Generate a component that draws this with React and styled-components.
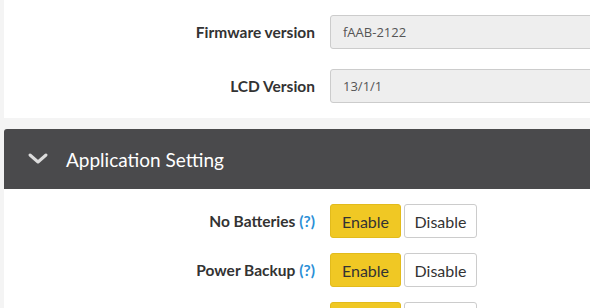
import React from 'react';
import styled, { createGlobalStyle } from 'styled-components';

const GlobalStyle = createGlobalStyle`
  html, body {
    margin: 0;
    padding: 0;
    background: #f4f4f4;
    font-family: 'Lato', 'Liberation Sans', sans-serif;
    color: #333;
    overflow: hidden;
  }
`;

const Page = styled.div`
  padding-left: 4px;
  width: 700px;
`;

const Card = styled.div`
  background: #fff;
  padding: 15px 0;
  display: flex;
  flex-direction: column;
  gap: ${p => p.gap}px;
`;

const Row = styled.div`
  display: grid;
  grid-template-columns: 311px auto;
  column-gap: 15px;
  align-items: center;
`;

const Label = styled.div`
  text-align: right;
  font-weight: 700;
  font-size: 15.5px;
  color: #333;
`;

const Help = styled.span`
  color: #2b8fd6;
  margin-left: 4px;
`;

const ReadOnly = styled.div`
  width: 300px;
  height: 34px;
  box-sizing: border-box;
  background: #eee;
  border: 1px solid #ccc;
  border-radius: 3px;
  padding: 0 12px;
  display: flex;
  align-items: center;
  font-family: 'Open Sans', 'DejaVu Sans', sans-serif;
  font-size: 13px;
  color: #555;
`;

const SectionHeader = styled.div`
  margin-top: 11px;
  height: 60px;
  background: #4a4a4c;
  border-radius: 3px 3px 0 0;
  display: flex;
  align-items: center;
  padding-left: 22px;
  gap: 16px;
  color: #fff;
  font-size: 19px;
`;

const Toggle = styled.div`
  display: flex;
  gap: 3px;
`;

const ToggleButton = styled.button`
  height: 34px;
  width: ${p => p.w}px;
  box-sizing: border-box;
  border-radius: 3px;
  border: 1px solid ${p => (p.active ? '#e2bb1c' : '#ccc')};
  background: ${p => (p.active ? '#f0c824' : '#fff')};
  color: #333;
  font-family: inherit;
  font-size: 16px;
  padding: 0;
  cursor: pointer;
`;

const Chevron = () => (
  <svg width="24" height="24" viewBox="0 0 24 24">
    <polyline points="4,8 12,15 20,8" fill="none" stroke="#dcdcdc" strokeWidth="3" strokeLinecap="round" strokeLinejoin="round" />
  </svg>
);

const settings = ['No Batteries', 'Power Backup', 'Auto Restart'];

const App = () => (
  <Page>
    <GlobalStyle />
    <Card gap={20}>
      <Row>
        <Label>Firmware version</Label>
        <ReadOnly>fAAB-2122</ReadOnly>
      </Row>
      <Row>
        <Label>LCD Version</Label>
        <ReadOnly>13/1/1</ReadOnly>
      </Row>
    </Card>
    <SectionHeader>
      <Chevron />
      Application Setting
    </SectionHeader>
    <Card gap={15}>
      {settings.map(name => (
        <Row key={name}>
          <Label>
            {name}
            <Help>(?)</Help>
          </Label>
          <Toggle>
            <ToggleButton active w={71}>Enable</ToggleButton>
            <ToggleButton w={73}>Disable</ToggleButton>
          </Toggle>
        </Row>
      ))}
    </Card>
  </Page>
);

export default App;
